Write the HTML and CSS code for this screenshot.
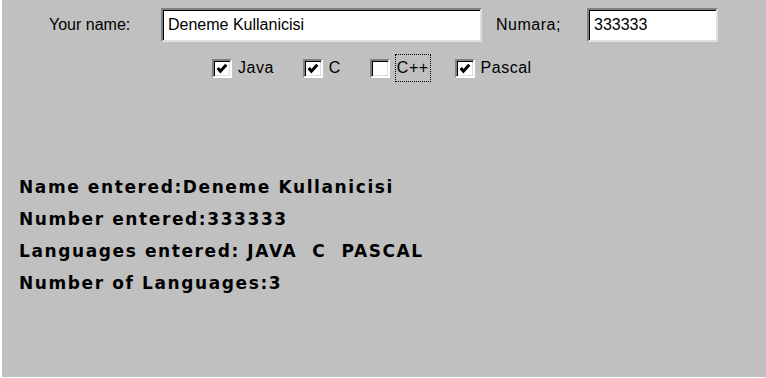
FILE: index.html
```html
<!DOCTYPE html>
<html lang="en">
<head>
    <meta charset="UTF-8">
    <title>Applet</title>
    <link rel="stylesheet" href="styles.css">
</head>
<body>
    <div class="panel">
        <div class="rowInput">
            <span class="lblName">Your name:</span>
            <div class="field fieldName">Deneme Kullanicisi</div>
            <span class="lblNum">Numara;</span>
            <div class="field fieldNum">333333</div>
        </div>

        <div class="rowCheck">
            <div class="chk">
                <span class="box"><svg viewBox="0 0 14 14"><polyline points="3,6.5 5.5,9.5 11,3.5"/></svg></span>
                <span class="chkText">Java</span>
            </div>
            <div class="chk">
                <span class="box"><svg viewBox="0 0 14 14"><polyline points="3,6.5 5.5,9.5 11,3.5"/></svg></span>
                <span class="chkText">C</span>
            </div>
            <div class="chk">
                <span class="box"></span>
                <span class="chkText focus">C++</span>
            </div>
            <div class="chk">
                <span class="box"><svg viewBox="0 0 14 14"><polyline points="3,6.5 5.5,9.5 11,3.5"/></svg></span>
                <span class="chkText">Pascal</span>
            </div>
        </div>

        <div class="result">
            <p>Name entered:Deneme Kullanicisi</p>
            <p>Number entered:333333</p>
            <p>Languages entered: JAVA&nbsp; C&nbsp; PASCAL</p>
            <p>Number of Languages:3</p>
        </div>
    </div>
</body>
</html>
```

FILE: styles.css
```css
body {
    margin: 0;
    background: #ffffff;
}
.panel {
    margin-left: 2px;
    height: 377px;
    background: #c0c0c0;
    font-family: "Liberation Sans", Arial, sans-serif;
    font-size: 16px;
    color: #000000;
    overflow: hidden;
}
.rowInput {
    display: flex;
    align-items: center;
    padding-top: 8px;
    padding-left: 47px;
}
.lblName {
    width: 112px;
}
.lblNum {
    width: 91px;
    margin-left: 14px;
    letter-spacing: 0.5px;
}
.field {
    box-sizing: border-box;
    height: 34px;
    background: #ffffff;
    border-top: 2px solid #808080;
    border-left: 2px solid #808080;
    border-right: 2px solid #dfdfdf;
    border-bottom: 2px solid #dfdfdf;
    box-shadow: inset 1px 1px 0 #000000;
    padding: 4px 0 0 5px;
    line-height: 22px;
}
.fieldName {
    width: 321px;
}
.fieldNum {
    width: 131px;
}
.rowCheck {
    display: flex;
    align-items: center;
    gap: 29px;
    padding-left: 210px;
    margin-top: 13px;
    height: 26px;
}
.chk {
    display: flex;
    align-items: center;
    gap: 6px;
}
.box {
    box-sizing: border-box;
    width: 20px;
    height: 19px;
    background: #ffffff;
    border-top: 2px solid #808080;
    border-left: 2px solid #808080;
    border-right: 2px solid #ffffff;
    border-bottom: 2px solid #ffffff;
    box-shadow: inset 1px 1px 0 #000000, inset -1px -1px 0 #dfdfdf;
    display: flex;
}
.box svg {
    width: 16px;
    height: 15px;
    fill: none;
    stroke: #000000;
    stroke-width: 2.8;
}
.chkText {
    letter-spacing: 0.5px;
}
.focus {
    border: 1px dotted #000000;
    padding: 4px 1px;
    margin-left: -1px;
    margin-right: -5px;
}
.result {
    padding-left: 17px;
    margin-top: 90px;
    font-family: "DejaVu Sans", Verdana, sans-serif;
    font-weight: bold;
    font-size: 17px;
    letter-spacing: 1.6px;
}
.result p {
    margin: 0;
    line-height: 32px;
}
```
